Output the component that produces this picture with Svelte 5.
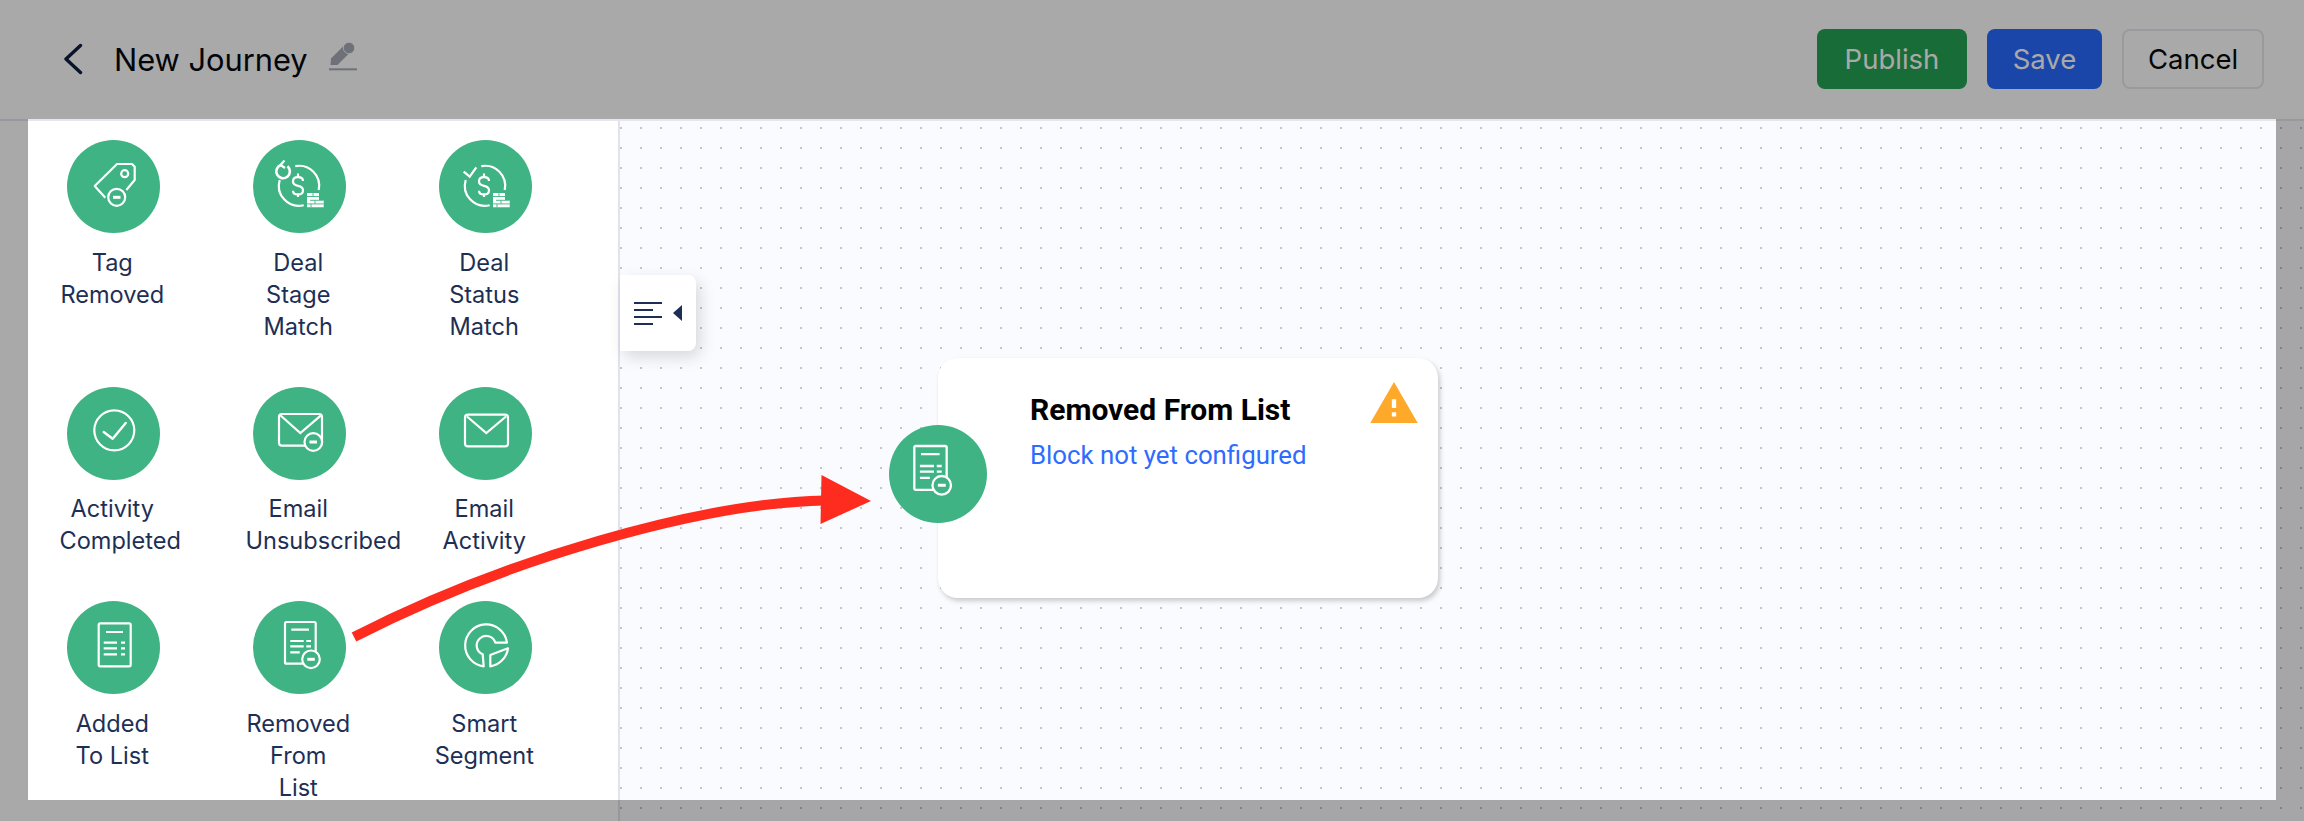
<script>
  const blocks = [
    { icon: 'tag', lines: ['Tag', 'Removed'] },
    { icon: 'stage', lines: ['Deal', 'Stage', 'Match'] },
    { icon: 'status', lines: ['Deal', 'Status', 'Match'] },
    { icon: 'done', lines: ['Activity', 'Completed'] },
    { icon: 'unsub', lines: ['Email', 'Unsubscribed'] },
    { icon: 'mail', lines: ['Email', 'Activity'] },
    { icon: 'added', lines: ['Added', 'To List'] },
    { icon: 'removed', lines: ['Removed', 'From', 'List'] },
    { icon: 'segment', lines: ['Smart', 'Segment'] }
  ]
</script>

<svg class="defs" width="0" height="0">
  <symbol id="dollar" viewBox="0 0 93 93">
    <g fill="none" stroke="#fff" stroke-width="2.2">
      <path d="M42.3 26.2A20 20 0 0 1 65.7 50" />
      <path d="M26.7 40A20 20 0 0 0 50.7 65.2" />
      <path d="M50 41c0-2.2-2-3.800-5-3.800s-5 1.600-5 4.300 2.500 3.800 5 4.300 5 1.600 5 4.400-2 4.300-5 4.300-5-1.600-5-3.800" />
      <path d="M45 33.500v3.700M45 53.500v3.500" />
    </g>
    <path d="M54 53h12v7h4.700v7.300H54z" fill="#fff" />
    <path d="M54 56.500h12M57 60.300h13.700M54 63.900h16.700M60 53v3.500M62 60.300v3.600M58 63.900v3.400" stroke="#3fb383" stroke-width="0.9" fill="none" />
  </symbol>
  <symbol id="tag" viewBox="0 0 93 93">
    <g fill="none" stroke="#fff" stroke-width="2.2" stroke-linejoin="round">
      <path d="M38.300 57.700 27.700 46 50 24h15l2.700 2.700V40l-8.400 10" />
      <circle cx="57.700" cy="33.700" r="3.500" />
      <circle cx="49.700" cy="57.300" r="8.500" />
    </g>
    <path d="M46 57.300h7.500" stroke="#fff" stroke-width="3" />
  </symbol>
  <symbol id="stage" viewBox="0 0 93 93">
    <use href="#dollar" />
    <path d="M28 25A6.800 6.800 0 1 0 34.500 26.300" fill="none" stroke="#fff" stroke-width="2.600" />
    <path d="M31.500 20.500 27.500 25l4.500 3" fill="none" stroke="#fff" stroke-width="2.200" />
  </symbol>
  <symbol id="status" viewBox="0 0 93 93">
    <use href="#dollar" />
    <path d="M24.700 31.700l6 5 6.600-9.400" fill="none" stroke="#fff" stroke-width="2.2" />
  </symbol>
  <symbol id="done" viewBox="0 0 93 93">
    <circle cx="47.300" cy="43.300" r="20" fill="none" stroke="#fff" stroke-width="2.2" />
    <path d="M36.700 45l9 6.700L58.700 36" fill="none" stroke="#fff" stroke-width="2.400" stroke-linecap="round" stroke-linejoin="round" />
  </symbol>
  <symbol id="unsub" viewBox="0 0 93 93">
    <g fill="none" stroke="#fff" stroke-width="2.2">
      <rect x="26" y="27" width="43" height="31.700" rx="3" />
      <path d="M27.300 28.300 47.300 46 68 28.300" />
    </g>
    <circle cx="60.300" cy="55" r="8.800" fill="#3fb383" stroke="#fff" stroke-width="2.2" />
    <path d="M56.500 55h7.500" stroke="#fff" stroke-width="3" />
  </symbol>
  <symbol id="mail" viewBox="0 0 93 93">
    <g fill="none" stroke="#fff" stroke-width="2.2">
      <rect x="26" y="27.700" width="43" height="31.700" rx="3" />
      <path d="M28 29.500 47.300 46 67 29.500" />
    </g>
  </symbol>
  <symbol id="added" viewBox="0 0 93 93">
    <g fill="none" stroke="#fff" stroke-width="2.2">
      <rect x="31.700" y="22.300" width="32" height="43" rx="1.500" />
      <path d="M39 31h17M36.700 41.700H50M36.700 47.300H50M36.700 53.300H50M54 41.700h4M54 47.300h4M54 53.300h4" />
    </g>
  </symbol>
  <symbol id="removed" viewBox="0 0 93 93">
    <g fill="none" stroke="#fff" stroke-width="2.2">
      <rect x="32" y="21" width="30.700" height="41.700" rx="1.500" />
      <path d="M38.300 28.700H56M37.300 40h13.400M37.300 45.300h13.400M37.300 51.300h9.400M53.300 40H58M53.300 45.300H58" />
    </g>
    <circle cx="58" cy="58.300" r="8.800" fill="#3fb383" stroke="#fff" stroke-width="2.2" />
    <path d="M54.300 58.300h7.500" stroke="#fff" stroke-width="3" />
  </symbol>
  <symbol id="segment" viewBox="0 0 93 93">
    <g fill="none" stroke="#fff" stroke-width="2.2" stroke-linejoin="round">
      <path d="M44.700 65.300A21 21 0 1 1 68 41.700H56.300A9.500 9.500 0 1 0 43.700 53.300z" />
      <path d="M51.300 65.300V54L69 47.300A21 21 0 0 1 51.300 65.300z" />
    </g>
  </symbol>
</svg>

<div class="page">
  <header>
    <div class="left">
      <svg class="back" width="20" height="32" viewBox="0 0 20 32">
        <path d="M16.500 2.500 2 16l14.500 13.500" fill="none" stroke="#0f1f40" stroke-width="3.400" stroke-linecap="round" stroke-linejoin="round" />
      </svg>
      <h1>New Journey</h1>
      <svg class="pencil" width="28" height="32" viewBox="0 0 28 32">
        <path d="M1.500 25l.5-6.500L14 6.500l6.500 6.500-12 12z" fill="#a6acb6" />
        <circle cx="20" cy="8" r="5.700" fill="#a6acb6" stroke="#fff" stroke-width="0.8" />
        <rect x="0" y="28.300" width="28" height="2" fill="#a6acb6" />
      </svg>
    </div>
    <div class="actions">
      <button class="publish">Publish</button>
      <button class="save">Save</button>
      <button class="cancel">Cancel</button>
    </div>
  </header>

  <main>
    <aside>
      <div class="grid">
        {#each blocks as b}
          <div class="block">
            <div class="round">
              <svg width="93" height="93" viewBox="0 0 93 93"><use href="#{b.icon}" /></svg>
            </div>
            <div class="label">
              {#each b.lines as line}
                <div>{line}</div>
              {/each}
            </div>
          </div>
        {/each}
      </div>
    </aside>

    <section class="canvas">
      <button class="toggle" aria-label="Toggle blocks">
        <span class="bars"><i></i><i class="short"></i><i></i><i class="short"></i></span>
        <span class="tri"></span>
      </button>

      <div class="node">
        <div class="node-icon">
          <svg width="98" height="98" viewBox="7.300 1 85.200 85.200"><use href="#removed" /></svg>
        </div>
        <div class="node-text">
          <div class="node-title">Removed From List</div>
          <div class="node-sub">Block not yet configured</div>
        </div>
        <svg class="warn" width="48" height="41" viewBox="1 2 22 19">
          <path d="M1 21h22L12 2 1 21zm12-3h-2v-2h2v2zm0-4h-2v-4h2v4z" fill="#ffa92b" />
        </svg>
      </div>
    </section>
  </main>

  <div class="spotlight"></div>

  <svg class="arrow" width="2304" height="821" viewBox="0 0 2304 821">
    <path d="M354 637C504 560 700 503 825 500.500" fill="none" stroke="#fe2c1f" stroke-width="10" />
    <path d="M821.500 475 871 501 820.500 524z" fill="#fe2c1f" />
  </svg>
</div>

<style>
  :global(body) {
    margin: 0;
    background: #fff;
  }
  .defs {
    position: absolute;
  }
  .page {
    position: relative;
    width: 2304px;
    height: 821px;
    overflow: hidden;
    display: flex;
    flex-direction: column;
    font-family: Inter, "Liberation Sans", sans-serif;
  }
  header {
    height: 118px;
    flex: none;
    border-bottom: 2px solid #e6e6ef;
    display: flex;
    align-items: center;
    justify-content: space-between;
    padding: 0 40px 1px 64px;
    background: #fff;
  }
  .left {
    display: flex;
    align-items: center;
  }
  .back {
    margin-right: 30px;
  }
  h1 {
    margin: 0;
    font-size: 30.800px;
    font-weight: 400;
    color: #05080f;
  }
  .pencil {
    margin-left: 21px;
    margin-top: -7px;
  }
  .actions {
    display: flex;
    gap: 20px;
  }
  button {
    font-family: inherit;
  }
  .actions button {
    height: 60px;
    font-size: 27.500px;
    border-radius: 8px;
    border: 0;
    color: #fff;
  }
  .publish {
    width: 150px;
    background: #24a353;
  }
  .save {
    width: 115px;
    background: #276afd;
  }
  .actions .cancel {
    width: 142px;
    background: #fff;
    border: 2px solid #e9e9ee;
    color: #0a0a0a;
  }
  main {
    flex: 1;
    display: flex;
    min-height: 0;
  }
  aside {
    width: 618px;
    flex: none;
    border-right: 2px solid #e2e2ec;
    background: #fff;
  }
  .grid {
    display: grid;
    grid-template-columns: repeat(3, 104px);
    column-gap: 82px;
    row-gap: 44px;
    padding: 19px 0 0 61px;
  }
  .round {
    width: 93px;
    height: 93px;
    margin: 0 auto;
    border-radius: 50%;
    background: #3fb383;
  }
  .round svg,
  .node-icon svg {
    display: block;
  }
  .label {
    margin: 13.500px 0 0 -1.500px;
    font-size: 23.550px;
    line-height: 32px;
    color: #1e2f55;
    text-align: center;
  }
  .canvas {
    position: relative;
    flex: 1;
    background-color: #fafbfe;
    background-image: radial-gradient(circle, #c4c5c9 1px, transparent 1.100px);
    background-size: 20px 20px;
    background-position: -9px -3px;
  }
  .toggle {
    position: absolute;
    left: 0;
    top: 154px;
    width: 76px;
    height: 76px;
    padding: 0 0 0 14px;
    display: flex;
    align-items: center;
    gap: 11px;
    background: #fff;
    border: 0;
    border-radius: 0 8px 8px 0;
    box-shadow: 4px 6px 16px rgba(0, 0, 0, 0.14);
  }
  .bars {
    display: flex;
    flex-direction: column;
    gap: 5px;
    width: 28px;
  }
  .bars i {
    display: block;
    height: 2px;
    background: #1e2f55;
  }
  .bars i.short {
    width: 19px;
  }
  .tri {
    width: 0;
    height: 0;
    border-top: 8px solid transparent;
    border-bottom: 8px solid transparent;
    border-right: 9px solid #1e2f55;
  }
  .node {
    position: absolute;
    left: 318px;
    top: 237px;
    width: 500px;
    height: 240px;
    box-sizing: border-box;
    padding: 34px 0 0 92px;
    background: #fff;
    border-radius: 20px;
    box-shadow: 2px 3px 5px rgba(0, 0, 0, 0.2);
  }
  .node-icon {
    position: absolute;
    left: -49px;
    top: 67px;
    width: 98px;
    height: 98px;
    border-radius: 50%;
    background: #3fb383;
  }
  .node-text {
    font-family: Roboto, sans-serif;
  }
  .node-title {
    font-size: 30px;
    font-weight: 700;
    line-height: 36px;
    color: #000;
  }
  .node-sub {
    margin-top: 12px;
    font-size: 25.800px;
    line-height: 30px;
    color: #2f6bff;
  }
  .warn {
    position: absolute;
    right: 20px;
    top: 24px;
  }
  .spotlight {
    position: absolute;
    left: 28px;
    top: 119px;
    width: 2248px;
    height: 681px;
    box-shadow: 0 0 0 3000px rgba(0, 0, 0, 0.337);
    pointer-events: none;
  }
  .arrow {
    position: absolute;
    left: 0;
    top: 0;
    pointer-events: none;
  }
</style>
